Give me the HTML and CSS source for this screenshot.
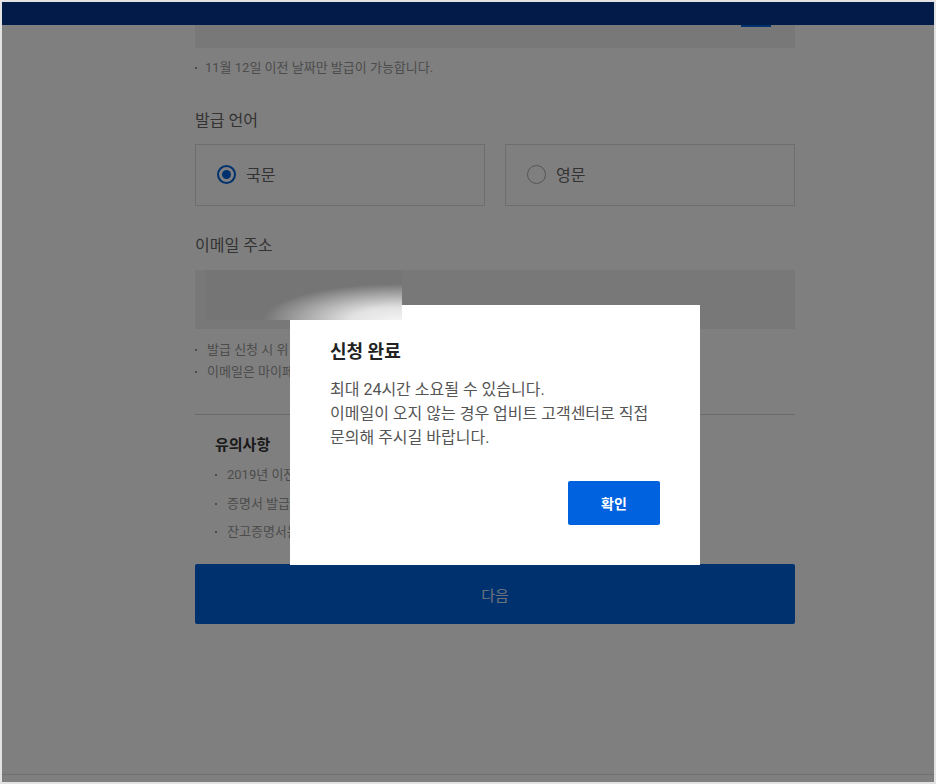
FILE: index.html
```html
<!DOCTYPE html>
<html lang="ko">
<head>
  <meta charset="UTF-8" />
  <title>잔고증명서 발급</title>
  <link rel="stylesheet" href="styles.css">
</head>
<body>
  <div class="window">
    <header class="top-bar"></header>

    <main class="content">
      <div class="field-box date-field">
        <span class="date-btn"></span>
      </div>
      <ul class="help-list first">
        <li>11월 12일 이전 날짜만 발급이 가능합니다.</li>
      </ul>

      <h3 class="field-label">발급 언어</h3>
      <div class="lang-options">
        <label class="lang-option"><span class="radio checked"></span>국문</label>
        <label class="lang-option"><span class="radio"></span>영문</label>
      </div>

      <h3 class="field-label email-label">이메일 주소</h3>
      <div class="field-box email-field"></div>
      <ul class="help-list">
        <li>발급 신청 시 위 이메일 주소로 증명서가 발송됩니다.</li>
        <li>이메일은 마이페이지에서 변경할 수 있습니다.</li>
      </ul>

      <div class="notice">
        <h4>유의사항</h4>
        <ul class="help-list">
          <li>2019년 이전 거래내역은 발급이 불가합니다.</li>
          <li>증명서 발급은 하루 최대 5회까지 가능합니다.</li>
          <li>잔고증명서는 신청일 기준으로 발급됩니다.</li>
        </ul>
      </div>

      <button class="next-btn">다음</button>
    </main>

    <footer class="page-footer"></footer>

    <div class="dim">
      <div class="dialog">
        <h2 class="dialog-title">신청 완료</h2>
        <p class="dialog-text">
          최대 24시간 소요될 수 있습니다.<br>
          이메일이 오지 않는 경우 업비트 고객센터로 직접<br>
          문의해 주시길 바랍니다.
        </p>
        <div class="dialog-actions">
          <button class="confirm-btn">확인</button>
        </div>
      </div>
    </div>

    <div class="redact"></div>
  </div>
</body>
</html>
```

FILE: styles.css
```css
:root {
  --navy: #073690;
  --blue: #0062df;
  --line: #dcdcdc;
  --field-bg: #f0f0f0;
  --text-help: #999999;
  --text-label: #666666;
  --text-dark: #333333;
}

* {
  margin: 0;
  padding: 0;
  box-sizing: border-box;
}

html, body {
  height: 100%;
}

body {
  background-color: #e3e3e3;
  font-family: Roboto, "Noto Sans CJK KR", sans-serif;
  color: var(--text-dark);
  overflow: hidden;
}

.window {
  position: relative;
  margin: 2px;
  width: 932px;
  height: 780px;
  background-color: #ffffff;
  overflow: hidden;
  display: flex;
  flex-direction: column;
}

.top-bar {
  height: 23px;
  flex-shrink: 0;
  background-color: var(--navy);
}

.content {
  flex-grow: 1;
  width: 600px;
  margin-left: 193px;
  display: flex;
  flex-direction: column;
}

.field-box {
  background-color: var(--field-bg);
}

.date-field {
  height: 23px;
  display: flex;
  justify-content: flex-end;
  padding-right: 24px;
}

.date-btn {
  width: 30px;
  height: 2px;
  background-color: var(--blue);
}

.email-field {
  height: 59px;
  margin-top: 13px;
}

.help-list {
  list-style: none;
  font-size: 13px;
  line-height: 22px;
  color: var(--text-help);
  margin-top: 10px;
}

.help-list.first {
  line-height: 20px;
}

.help-list li {
  display: flex;
  align-items: center;
  gap: 10px;
  white-space: nowrap;
}

.help-list.first li {
  gap: 8px;
}

.help-list li::before {
  content: "";
  width: 2px;
  height: 2px;
  flex-shrink: 0;
  background-color: var(--text-help);
}

.field-label {
  margin-top: 32px;
  font-size: 16px;
  font-weight: 400;
  line-height: 22px;
  color: var(--text-label);
}

.email-label {
  margin-top: 29px;
}

.lang-options {
  margin-top: 12px;
  display: flex;
  gap: 20px;
}

.lang-option {
  flex: 1;
  height: 62px;
  border: 1px solid var(--line);
  display: flex;
  align-items: center;
  gap: 10px;
  padding: 0 0 2px 21px;
  font-size: 16px;
  color: var(--text-label);
}

.radio {
  width: 19px;
  height: 19px;
  border-radius: 50%;
  border: 1.5px solid #aaaaaa;
  display: flex;
  align-items: center;
  justify-content: center;
}

.radio.checked {
  border: 2px solid var(--blue);
}

.radio.checked::after {
  content: "";
  width: 9px;
  height: 9px;
  border-radius: 50%;
  background-color: var(--blue);
}

.notice {
  margin-top: 31px;
  border-top: 1px solid #d6d6d6;
  padding: 19px 20px 0;
}

.notice h4 {
  font-size: 15px;
  font-weight: 700;
  line-height: 22px;
  color: var(--text-dark);
}

.notice .help-list {
  margin-top: 9px;
  line-height: 20px;
}

.notice .help-list li + li {
  margin-top: 8.5px;
}

.next-btn {
  margin-top: 22px;
  height: 60px;
  border: none;
  border-radius: 2px;
  background-color: var(--blue);
  color: #d8e4f4;
  font-family: inherit;
  font-size: 15px;
}

.page-footer {
  height: 8px;
  flex-shrink: 0;
  border-top: 1px solid #e0e0e0;
}

/* modal */
.dim {
  position: absolute;
  inset: 0;
  background-color: rgba(0, 0, 0, 0.5);
  display: flex;
  align-items: flex-start;
  padding: 303px 0 0 288px;
}

.dialog {
  width: 410px;
  height: 260px;
  background-color: #ffffff;
  padding: 35px 40px 40px 40px;
  display: flex;
  flex-direction: column;
}

.dialog-title {
  font-size: 18px;
  font-weight: 700;
  line-height: 24px;
  color: #222222;
}

.dialog-text {
  margin-top: 14px;
  font-size: 16px;
  line-height: 24px;
  color: #555555;
  white-space: nowrap;
}

.dialog-actions {
  margin-top: auto;
  display: flex;
  justify-content: flex-end;
}

.confirm-btn {
  width: 92px;
  height: 44px;
  border: none;
  border-radius: 2px;
  background-color: var(--blue);
  color: #ffffff;
  font-family: inherit;
  font-size: 14px;
  font-weight: 700;
}

/* blurred-out email value */
.redact {
  position: absolute;
  left: 203px;
  top: 268px;
  width: 197px;
  height: 50px;
  background:
    radial-gradient(ellipse 135px 36px at 98% 100%, #f3f3f3 0%, #e2e2e2 35%, rgba(119, 119, 119, 0) 100%),
    #757575;
}
```
